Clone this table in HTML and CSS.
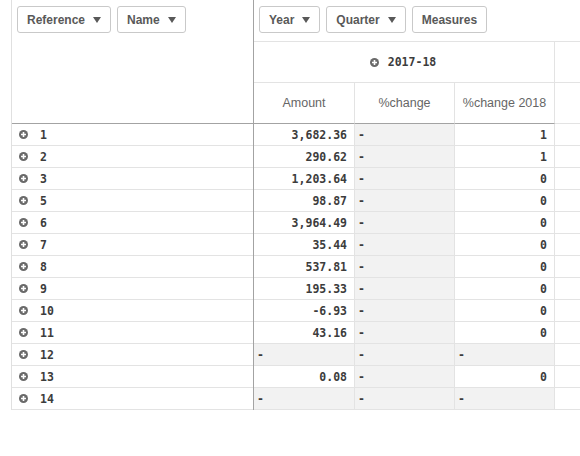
FILE: index.html
```html
<!DOCTYPE html>
<html>
<head>
<meta charset="utf-8">
<link rel="stylesheet" href="styles.css">
</head>
<body>
<div class="pivot">
  <div class="left">
    <div class="left-head">
      <div class="btns">
        <span class="btn">Reference <i class="caret"></i></span>
        <span class="btn">Name <i class="caret"></i></span>
      </div>
    </div>
    <div class="lrow"><svg class="plus" viewBox="0 0 9 9"><circle cx="4.5" cy="4.5" r="4.5"/><path d="M4.5 2v5M2 4.5h5"/></svg><span>1</span></div>
    <div class="lrow"><svg class="plus" viewBox="0 0 9 9"><circle cx="4.5" cy="4.5" r="4.5"/><path d="M4.5 2v5M2 4.5h5"/></svg><span>2</span></div>
    <div class="lrow"><svg class="plus" viewBox="0 0 9 9"><circle cx="4.5" cy="4.5" r="4.5"/><path d="M4.5 2v5M2 4.5h5"/></svg><span>3</span></div>
    <div class="lrow"><svg class="plus" viewBox="0 0 9 9"><circle cx="4.5" cy="4.5" r="4.5"/><path d="M4.5 2v5M2 4.5h5"/></svg><span>5</span></div>
    <div class="lrow"><svg class="plus" viewBox="0 0 9 9"><circle cx="4.5" cy="4.5" r="4.5"/><path d="M4.5 2v5M2 4.5h5"/></svg><span>6</span></div>
    <div class="lrow"><svg class="plus" viewBox="0 0 9 9"><circle cx="4.5" cy="4.5" r="4.5"/><path d="M4.5 2v5M2 4.5h5"/></svg><span>7</span></div>
    <div class="lrow"><svg class="plus" viewBox="0 0 9 9"><circle cx="4.5" cy="4.5" r="4.5"/><path d="M4.5 2v5M2 4.5h5"/></svg><span>8</span></div>
    <div class="lrow"><svg class="plus" viewBox="0 0 9 9"><circle cx="4.5" cy="4.5" r="4.5"/><path d="M4.5 2v5M2 4.5h5"/></svg><span>9</span></div>
    <div class="lrow"><svg class="plus" viewBox="0 0 9 9"><circle cx="4.5" cy="4.5" r="4.5"/><path d="M4.5 2v5M2 4.5h5"/></svg><span>10</span></div>
    <div class="lrow"><svg class="plus" viewBox="0 0 9 9"><circle cx="4.5" cy="4.5" r="4.5"/><path d="M4.5 2v5M2 4.5h5"/></svg><span>11</span></div>
    <div class="lrow"><svg class="plus" viewBox="0 0 9 9"><circle cx="4.5" cy="4.5" r="4.5"/><path d="M4.5 2v5M2 4.5h5"/></svg><span>12</span></div>
    <div class="lrow"><svg class="plus" viewBox="0 0 9 9"><circle cx="4.5" cy="4.5" r="4.5"/><path d="M4.5 2v5M2 4.5h5"/></svg><span>13</span></div>
    <div class="lrow"><svg class="plus" viewBox="0 0 9 9"><circle cx="4.5" cy="4.5" r="4.5"/><path d="M4.5 2v5M2 4.5h5"/></svg><span>14</span></div>
  </div>
  <div class="right">
    <div class="right-head">
      <div class="btns">
        <span class="btn">Year <i class="caret"></i></span>
        <span class="btn">Quarter <i class="caret"></i></span>
        <span class="btn">Measures</span>
      </div>
    </div>
    <div class="grid">
      <div class="title"><svg class="plus" viewBox="0 0 9 9"><circle cx="4.5" cy="4.5" r="4.5"/><path d="M4.5 2v5M2 4.5h5"/></svg><span>2017-18</span></div>
      <div class="c cut"></div>

      <div class="c hd">Amount</div><div class="c hd">%change</div><div class="c hd">%change 2018</div><div class="c cut hdcut"></div>

      <div class="c num">3,682.36</div><div class="c nul">-</div><div class="c num">1</div><div class="c cut"></div>
      <div class="c num">290.62</div><div class="c nul">-</div><div class="c num">1</div><div class="c cut"></div>
      <div class="c num">1,203.64</div><div class="c nul">-</div><div class="c num">0</div><div class="c cut"></div>
      <div class="c num">98.87</div><div class="c nul">-</div><div class="c num">0</div><div class="c cut"></div>
      <div class="c num">3,964.49</div><div class="c nul">-</div><div class="c num">0</div><div class="c cut"></div>
      <div class="c num">35.44</div><div class="c nul">-</div><div class="c num">0</div><div class="c cut"></div>
      <div class="c num">537.81</div><div class="c nul">-</div><div class="c num">0</div><div class="c cut"></div>
      <div class="c num">195.33</div><div class="c nul">-</div><div class="c num">0</div><div class="c cut"></div>
      <div class="c num">-6.93</div><div class="c nul">-</div><div class="c num">0</div><div class="c cut"></div>
      <div class="c num">43.16</div><div class="c nul">-</div><div class="c num">0</div><div class="c cut"></div>
      <div class="c nul">-</div><div class="c nul">-</div><div class="c nul">-</div><div class="c cut"></div>
      <div class="c num">0.08</div><div class="c nul">-</div><div class="c num">0</div><div class="c cut"></div>
      <div class="c nul">-</div><div class="c nul">-</div><div class="c nul">-</div><div class="c cut"></div>
    </div>
  </div>
</div>
</body>
</html>
```
FILE: styles.css
```css
* { box-sizing: border-box; }
html, body { margin: 0; padding: 0; background: #fff; }
body { width: 580px; height: 456px; overflow: hidden; }

.pivot {
  display: flex;
  padding-left: 11px;
  font-family: "DejaVu Sans Mono", monospace;
  color: #3c3c3c;
}

.left {
  width: 243px;
  flex: none;
  border-left: 1px solid #e0e0e0;
  border-right: 1px solid #a3a3a3;
}
.left-head {
  height: 124px;
  border-bottom: 1px solid #a3a3a3;
}
.btns {
  display: flex;
  gap: 6px;
  padding: 6px 0 0 5px;
}
.btn {
  display: inline-flex;
  align-items: center;
  gap: 8px;
  height: 27px;
  padding: 0 9px;
  border: 1px solid #c9c9c9;
  border-radius: 3px;
  background: #fff;
  font-family: "Liberation Sans", Arial, sans-serif;
  font-weight: bold;
  font-size: 12px;
  color: #595959;
}
.caret {
  width: 0;
  height: 0;
  border-left: 4px solid transparent;
  border-right: 4px solid transparent;
  border-top: 6px solid #595959;
  margin-top: 1px;
}

.plus { width: 9px; height: 9px; flex: none; display: block; }
.plus circle { fill: #6a6a6a; }
.plus path { stroke: #fff; stroke-width: 1.6; }

.lrow {
  height: 22px;
  border-bottom: 1px solid #e3e3e3;
  display: flex;
  align-items: center;
  gap: 12px;
  padding-left: 7px;
  font-weight: bold;
  font-size: 11.5px;
}

.right { flex: 1; min-width: 0; }
.right-head {
  height: 42px;
  border-bottom: 1px solid #e3e3e3;
}
.grid {
  display: grid;
  grid-template-columns: 101px 100px 100px 1fr;
  grid-template-rows: 41px 41px;
  grid-auto-rows: 22px;
}
.title {
  grid-column: 1 / 4;
  border-bottom: 1px solid #e3e3e3;
  border-right: 1px solid #e3e3e3;
  display: flex;
  align-items: center;
  justify-content: center;
  gap: 9px;
  font-weight: bold;
  font-size: 11.5px;
  padding-right: 2px;
}
.c {
  border-bottom: 1px solid #e3e3e3;
  border-right: 1px solid #e3e3e3;
  display: flex;
  align-items: center;
  font-weight: bold;
  font-size: 11.5px;
  white-space: nowrap;
  overflow: hidden;
}
.c.cut { border-right: none; }
.c.hd {
  justify-content: center;
  font-family: "Liberation Sans", Arial, sans-serif;
  font-weight: normal;
  font-size: 12.5px;
  color: #666;
  border-bottom-color: #a3a3a3;
}
.c.num { justify-content: flex-end; padding-right: 7px; }
.c.nul { background: #f2f2f2; padding-left: 3px; }
```
